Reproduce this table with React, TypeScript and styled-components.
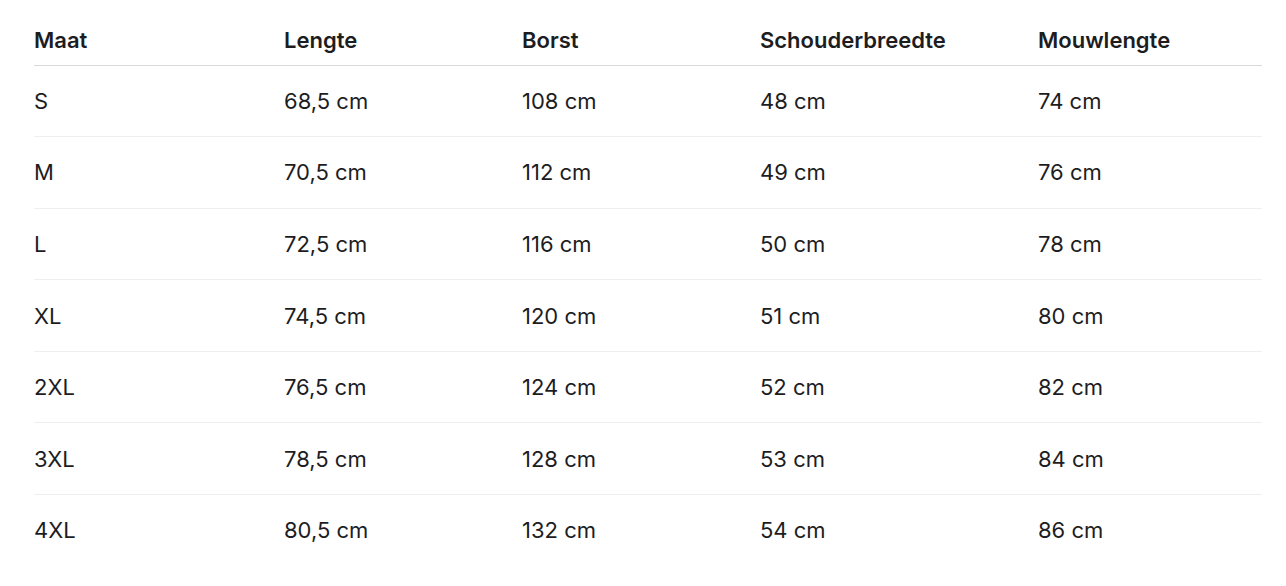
import * as React from 'react';
import styled, { createGlobalStyle } from 'styled-components';

const GlobalStyle = createGlobalStyle`
  html, body {
    margin: 0;
    padding: 0;
    background: #ffffff;
  }
  body {
    font-family: Inter, "Liberation Sans", Arial, sans-serif;
    color: #1d1d1f;
    -webkit-font-smoothing: antialiased;
  }
`;

const Page = styled.div`
  padding: 15px 24px 0 34px;
`;

const SizeTable = styled.table`
  width: 1228px;
  border-collapse: collapse;
  table-layout: fixed;
`;

const HeadCell = styled.th<{ $width: number }>`
  width: ${(props) => props.$width}px;
  height: 49.5px;
  padding: 0;
  text-align: left;
  vertical-align: middle;
  font-size: 22px;
  line-height: 26px;
  font-weight: 600;
  color: #1d1d1f;
  border-bottom: 1px solid #d9d9d9;
`;

const Row = styled.tr<{ $last?: boolean }>`
  border-bottom: ${(props) => (props.$last ? 'none' : '1px solid #efefef')};
`;

const Cell = styled.td`
  height: 70.6px;
  padding: 0;
  vertical-align: middle;
  font-size: 22px;
  line-height: 26px;
  font-weight: 400;
  color: #1d1d1f;
`;

const columns = [
  { label: 'Maat', width: 250 },
  { label: 'Lengte', width: 238 },
  { label: 'Borst', width: 238 },
  { label: 'Schouderbreedte', width: 278 },
  { label: 'Mouwlengte', width: 224 },
];

const rows = [
  ['S', '68,5 cm', '108 cm', '48 cm', '74 cm'],
  ['M', '70,5 cm', '112 cm', '49 cm', '76 cm'],
  ['L', '72,5 cm', '116 cm', '50 cm', '78 cm'],
  ['XL', '74,5 cm', '120 cm', '51 cm', '80 cm'],
  ['2XL', '76,5 cm', '124 cm', '52 cm', '82 cm'],
  ['3XL', '78,5 cm', '128 cm', '53 cm', '84 cm'],
  ['4XL', '80,5 cm', '132 cm', '54 cm', '86 cm'],
];

export default function App() {
  return (
    <>
      <GlobalStyle />
      <Page>
        <SizeTable>
          <thead>
            <tr>
              {columns.map((col) => (
                <HeadCell key={col.label} $width={col.width}>
                  {col.label}
                </HeadCell>
              ))}
            </tr>
          </thead>
          <tbody>
            {rows.map((row, i) => (
              <Row key={row[0]} $last={i === rows.length - 1}>
                {row.map((value, j) => (
                  <Cell key={j}>{value}</Cell>
                ))}
              </Row>
            ))}
          </tbody>
        </SizeTable>
      </Page>
    </>
  );
}
